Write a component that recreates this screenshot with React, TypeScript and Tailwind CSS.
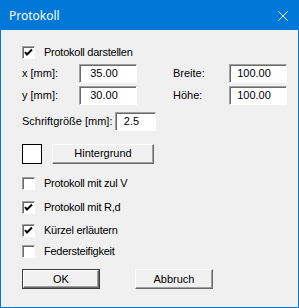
import React from "react";

const font = { fontFamily: '"Liberation Sans", Arial, sans-serif' };

function Check({ checked, label, className = "" }: { checked?: boolean; label: string; className?: string }) {
  return (
    <div className={`flex items-center h-[13px] ${className}`}>
      <div className="w-[13px] h-[13px] bg-white border border-t-[#a0a0a0] border-l-[#a0a0a0] border-r-white border-b-white shadow-[inset_1px_1px_0_#696969] flex items-center justify-center">
        {checked && (
          <svg width="11" height="11" viewBox="0 0 11 11">
            <path d="M2 5 L4 7.5 L9 2.5" stroke="#000" strokeWidth="2" fill="none" />
          </svg>
        )}
      </div>
      <span className="ml-[9px] tracking-[-0.25px]">{label}</span>
    </div>
  );
}

function Field({ value, className = "" }: { value: string; className?: string }) {
  return (
    <div className={`h-[19px] bg-white border border-t-[#a0a0a0] border-l-[#a0a0a0] border-r-white border-b-white shadow-[inset_1px_1px_0_#696969] flex items-center justify-center pr-[8px] ${className}`}>
      {value}
    </div>
  );
}

function Btn({ label, def, className = "" }: { label: string; def?: boolean; className?: string }) {
  return (
    <div className={`h-[20px] ${def ? "border border-[#3c3c3c]" : ""} ${className}`}>
      <div className="h-full bg-[#f0f0f0] border border-t-white border-l-white border-r-[#696969] border-b-[#696969] shadow-[inset_-1px_-1px_0_#a0a0a0] flex items-center justify-center">
        {label}
      </div>
    </div>
  );
}

export default function App() {
  return (
    <div className="w-[299px] h-[308px] border border-[#0078d7] bg-[#f0f0f0] flex flex-col text-[11px] text-black" style={font}>
      <div className="h-[29px] bg-[#0078d7] flex items-center justify-between pl-[8px] pr-[10px] shrink-0">
        <span className="text-white text-[12px]" style={{ fontFamily: '"Noto Sans", "Open Sans", sans-serif' }}>Protokoll</span>
        <svg width="10" height="10" viewBox="0 0 10 10">
          <path d="M0.5 0.5 L9.5 9.5 M9.5 0.5 L0.5 9.5" stroke="#fff" strokeWidth="1" />
        </svg>
      </div>
      <div className="flex flex-col pl-[21px]">
        <Check checked label="Protokoll darstellen" className="mt-[16px]" />
        <div className="flex items-center mt-[5px]">
          <span className="w-[57px]">x [mm]:</span>
          <Field value="35.00" className="w-[58px]" />
          <span className="ml-[36px] w-[56px]">Breite:</span>
          <Field value="100.00" className="w-[58px]" />
        </div>
        <div className="flex items-center mt-[3px]">
          <span className="w-[57px]">y [mm]:</span>
          <Field value="30.00" className="w-[58px]" />
          <span className="ml-[36px] w-[56px]">Höhe:</span>
          <Field value="100.00" className="w-[58px]" />
        </div>
        <div className="flex items-center mt-[7px]">
          <span className="w-[93px]">Schriftgröße [mm]:</span>
          <Field value="2.5" className="w-[41px]" />
        </div>
        <div className="flex items-center mt-[12px]">
          <div className="w-[20px] h-[20px] mt-[1px] bg-white border border-black" />
          <Btn label="Hintergrund" className="ml-[10px] w-[102px]" />
        </div>
        <Check label="Protokoll mit zul V" className="mt-[13px]" />
        <Check checked label="Protokoll mit R,d" className="mt-[11px]" />
        <Check checked label="Kürzel erläutern" className="mt-[10px]" />
        <Check label="Federsteifigkeit" className="mt-[8px]" />
        <div className="flex mt-[11px]">
          <Btn label="OK" def className="w-[78px]" />
          <Btn label="Abbruch" className="ml-[35px] w-[78px]" />
        </div>
      </div>
    </div>
  );
}
